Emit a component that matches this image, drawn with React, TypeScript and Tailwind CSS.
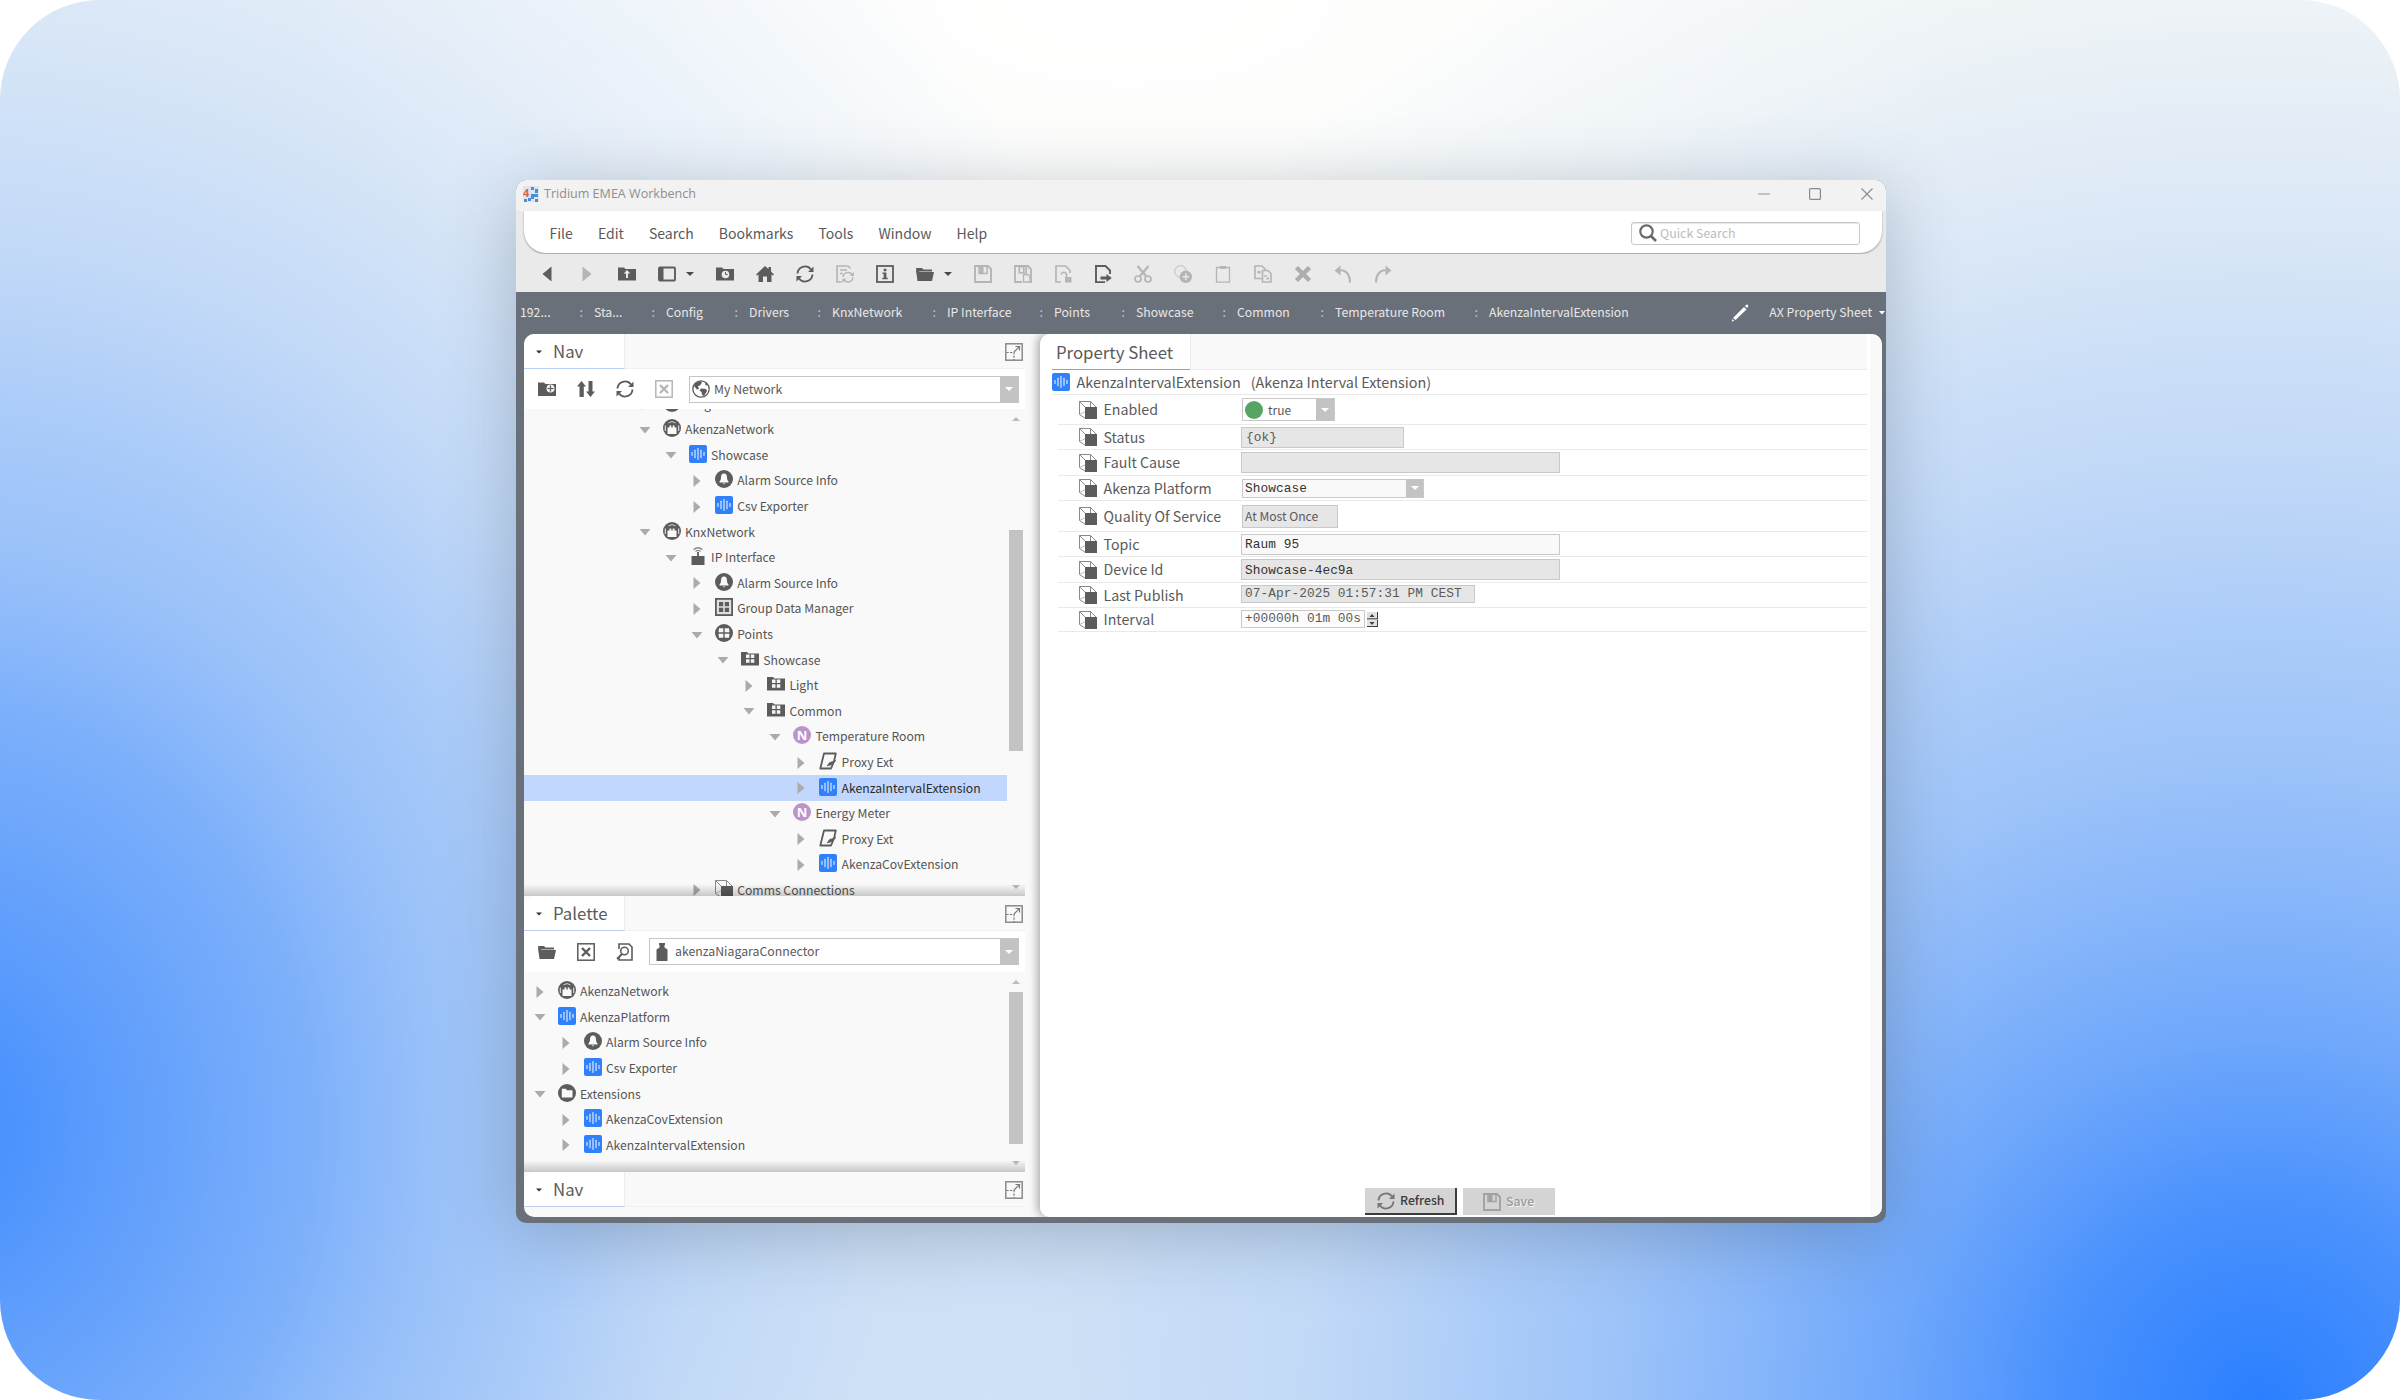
import type { ReactNode } from "react";

const DARK = "#5c5c5c";
const G = "#b5b5b5";

type IconProps = { color?: string; className?: string };

function Svg({ children, className = "w-[18px] h-[18px] shrink-0" }: { children: ReactNode; className?: string }) {
  return <svg viewBox="0 0 18 18" fill="none" className={className}>{children}</svg>;
}

function Akenza() {
  const bars = [[3, 4], [6, 8.500], [9, 12], [12, 8.500], [15, 4]];
  return (
    <Svg>
      <rect width="18" height="18" rx="2" fill="#2f80fb" />
      {bars.map(([x, h]) => (
        <rect key={x} x={x - 0.65} y={9 - h / 2} width="1.300" height={h} rx=".4" fill="#cfe1ff" />
      ))}
    </Svg>
  );
}

function Network() {
  return (
    <Svg>
      <circle cx="9" cy="9" r="9" fill={DARK} />
      <path d="M4.500 8.500H6.500V6.500h5v2h2V15h-9z" fill="#f9f9f9" />
      <path d="M2.300 6.500v5.500M15.700 6.500v5.500" stroke="#e4e4e4" strokeWidth="1.100" />
      <path d="M5.500 3.800Q9 1.400 12.500 3.800" stroke="#cfcfcf" strokeWidth="1" />
      <path d="M9 5v3.500" stroke={DARK} strokeWidth="1.400" />
    </Svg>
  );
}

function Bell() {
  return (
    <Svg>
      <circle cx="9" cy="9" r="9" fill={DARK} />
      <path d="M9 3.500c-2.300 0-3 1.800-3 4.200 0 2-.8 2.800-1.500 3.800v.9h9v-.9c-.7-1-1.500-1.800-1.500-3.800 0-2.400-.7-4.200-3-4.200zM7.800 13.200h2.400L9 14.500z" fill="#f9f9f9" />
    </Svg>
  );
}

function Router() {
  return (
    <Svg>
      <path d="M2.500 9h5.600V5h1.800v4h5.600v9h-13z" fill={DARK} />
      <path d="M4.500 2.800Q9-1.300 13.500 2.800M6.500 4.500Q9 2.300 11.500 4.500" stroke="#8a8a8a" strokeWidth="1.300" />
    </Svg>
  );
}

function GridBox() {
  return (
    <Svg>
      <rect x=".9" y=".9" width="16.200" height="16.200" stroke={DARK} strokeWidth="1.800" fill="#dedede" />
      <path d="M4 4h4.200v4.200H4zM9.800 4H14v4.200H9.800zM4 9.800h4.200V14H4zM9.800 9.800H14V14H9.800z" fill={DARK} />
    </Svg>
  );
}

function Points() {
  return (
    <Svg>
      <circle cx="9" cy="9" r="9" fill={DARK} />
      <path d="M4 4.200h4.300v4H3.500zM9.700 4.200H14l.5 4H9.700zM3.500 9.800h4.800v4H4zM9.700 9.800h4.800l-.5 4H9.700z" fill="#f9f9f9" />
    </Svg>
  );
}

function PointFolder() {
  return (
    <Svg>
      <path d="M0 2h6l1.500 1.500H18V15.500H0z" fill={DARK} />
      <path d="M5 4.500h3.500V8H5zM9.800 4.500h3.500V8H9.800zM5 9.300h3.500v3.500H5zM9.800 9.300h3.500v3.500H9.800z" fill="#f4f4f4" />
    </Svg>
  );
}

function Numeric() {
  return (
    <span className="w-[18px] h-[18px] shrink-0 rounded-full bg-[#bc93cb] text-white font-bold text-[13px] leading-[18px] text-center font-['Noto_Sans',sans-serif]">
      N
    </span>
  );
}

function Proxy() {
  return (
    <Svg>
      <path d="M5 1.500H16.800L15 9.500l-3 7H1.300z" stroke={DARK} strokeWidth="1.800" strokeLinejoin="round" />
      <path d="M17 8.500l-6.500 2L8 14l4-1z" fill={DARK} stroke={DARK} strokeWidth=".6" />
    </Svg>
  );
}

function Cube() {
  return (
    <Svg>
      <path d="M.5.5h11l6 6M.5.5L6.500 6.500M.5.5v13l6 4M11.500.5v6" stroke="#8a8a8a" strokeWidth="1" />
      <path d="M.5 13.500l6-3" stroke="#aaa" strokeWidth=".8" />
      <rect x="6" y="6" width="12" height="12" fill={DARK} />
    </Svg>
  );
}

function CircleFolder() {
  return (
    <Svg>
      <circle cx="9" cy="9" r="9" fill={DARK} />
      <path d="M3.800 4.800h4l1.200 1.400h5.500v7.300H3.800z" fill="#f9f9f9" />
    </Svg>
  );
}

function Refresh({ color = DARK, className }: IconProps) {
  return (
    <Svg className={className}>
      <path d="M1.500 8.500A7.500 7.500 0 0 1 15 4.500M16.500 9.500A7.500 7.500 0 0 1 3 13.500" stroke={color} strokeWidth="1.900" />
      <path d="M17.500 1.500v5.500h-5.500zM.5 16.500v-5.500h5.500z" fill={color} />
    </Svg>
  );
}

function Floppy({ color = G, className }: IconProps) {
  return (
    <Svg className={className}>
      <path d="M1 1h13l3 3v13H1z" stroke={color} strokeWidth="1.900" />
      <path d="M5 1v7.500h8V1" stroke={color} strokeWidth="1.500" />
      <path d="M5.500 2h4v6h-4z" fill={color} />
    </Svg>
  );
}

function OpenFolder() {
  return (
    <Svg>
      <path d="M0 3h6l1.500 1.500H16V6.500H3L1.500 12z" fill={DARK} />
      <path d="M3.500 7H18l-2 9H1.500L0 5z" fill={DARK} />
    </Svg>
  );
}

function BoxX({ color = DARK }: IconProps) {
  return (
    <Svg>
      <rect x=".8" y=".8" width="16.400" height="16.400" stroke={color} strokeWidth="1.500" />
      <path d="M5 5l8 8M13 5l-8 8" stroke={color} strokeWidth="2.400" />
    </Svg>
  );
}

function Expand() {
  return (
    <Svg>
      <rect x=".8" y=".8" width="16.400" height="16.400" stroke="#828282" strokeWidth="1.400" />
      <path d="M9 9l5.500-5.500M10.500 3.500h4v4" stroke="#777" strokeWidth="1.200" />
      <path d="M1.500 9.500h7.500v7.500" stroke="#777" strokeWidth="1.200" strokeDasharray="2.200 1.300" />
    </Svg>
  );
}

function Caret({ className = "text-[#4a4a4a]" }: { className?: string }) {
  return <svg viewBox="0 0 8 4" className={`w-2 h-1 shrink-0 ${className}`}><path d="M0 0h8L4 4z" fill="currentColor" /></svg>;
}

const toolbar: { name: string; caret?: boolean; icon: ReactNode }[] = [
  { name: "back", icon: <Svg><path d="M13.500 1.500v15L4.500 9z" fill={DARK} /></Svg> },
  { name: "forward", icon: <Svg><path d="M4.500 1.500v15l9-7.500z" fill={G} /></Svg> },
  {
    name: "up",
    icon: <Svg><path d="M0 2.500h6L7.500 4H18v11.500H0z" fill={DARK} /><path d="M9 5l3.300 3.500H10V13H8V8.500H5.700z" fill="#eaeaea" /></Svg>,
  },
  {
    name: "sidebar",
    caret: true,
    icon: <Svg><rect x="1" y="2.500" width="16" height="13" rx="1" stroke={DARK} strokeWidth="1.900" /><path d="M1 2.500h4.500v13H1z" fill={DARK} /></Svg>,
  },
  {
    name: "recent",
    icon: <Svg><path d="M0 2.500h6L7.500 4H18v11.500H0z" fill={DARK} /><circle cx="9.500" cy="9.500" r="3.800" fill="#eaeaea" /><path d="M9.500 7v2.500h2.200" stroke={DARK} strokeWidth="1" /></Svg>,
  },
  { name: "home", icon: <Svg><path d="M9 1l3.500 3V2H15v4.500l3 3-1.200 1-1.300-1V17H11v-5.500H7V17H2.500V9.500l-1.300 1-1.200-1z" fill={DARK} /></Svg> },
  { name: "refresh", icon: <Refresh /> },
  {
    name: "reload",
    icon: (
      <Svg>
        <path d="M5.500 17H1V1h11l2.500 2.500M4 5h7M4 8.500h3" stroke={G} strokeWidth="1.600" />
        <path d="M7 12a5 5 0 0 1 9-2.500M17 12.500a5 5 0 0 1-9 2.500" stroke={G} strokeWidth="1.400" />
        <path d="M17.800 7v4h-4zM6.300 17.800v-4h4z" fill={G} />
      </Svg>
    ),
  },
  {
    name: "info",
    icon: <Svg><rect x="1" y="1" width="16" height="16" stroke={DARK} strokeWidth="1.800" /><path d="M7.700 3.800h2.700v2.400H7.700zM6.500 7.500h3.900v5.300h1.300v1.500H6.300v-1.500h1.400V9H6.500z" fill={DARK} /></Svg>,
  },
  { name: "open", caret: true, icon: <OpenFolder /> },
  { name: "save", icon: <Floppy /> },
  {
    name: "save-as",
    icon: <Svg><path d="M8 17H1V1h13l3 3v13h-1" stroke={G} strokeWidth="1.800" /><path d="M5 1v7h7.500V1M5.500 2h4v5.500h-4z" stroke={G} strokeWidth="1.200" fill={G} fillOpacity=".6" /><path d="M9.500 9.500h4.500l2 2v5.500H9.500z" stroke={G} strokeWidth="1.300" /></Svg>,
  },
  {
    name: "lock",
    icon: <Svg><path d="M7 17H2V1h9.500L16 5.500V8" stroke={G} strokeWidth="1.700" /><path d="M7 9.500c1-3 5-3 5.500 0v3" stroke={G} strokeWidth="1.600" /><path d="M11 12h6.500v5.500H11z" fill={G} /></Svg>,
  },
  {
    name: "export",
    icon: <Svg><path d="M11 17.100H2V1h9.500L16 5.500V9" stroke={DARK} strokeWidth="1.900" /><path d="M6.500 11.500h6V9l5.300 4-5.300 4v-2.500h-6z" fill={DARK} /></Svg>,
  },
  {
    name: "cut",
    icon: <Svg><path d="M3.500 1l8.500 10M14.500 1L6 11" stroke={G} strokeWidth="2.200" /><circle cx="4" cy="14" r="3" stroke={G} strokeWidth="1.700" /><circle cx="14" cy="14" r="3" stroke={G} strokeWidth="1.700" /></Svg>,
  },
  {
    name: "duplicate",
    icon: <Svg><circle cx="6.500" cy="6.500" r="5.800" stroke="#cacaca" strokeWidth="1.200" /><circle cx="11.800" cy="11.800" r="6.200" fill={G} /><path d="M11.800 8.500v6.600M8.500 11.800h6.600" stroke="#eaeaea" strokeWidth="1.400" /></Svg>,
  },
  {
    name: "paste",
    icon: <Svg><path d="M2.500 2.500h13v14.700h-13z" stroke={G} strokeWidth="1.300" /><path d="M6 1h6v2.800H6z" fill={G} /></Svg>,
  },
  {
    name: "copy",
    icon: <Svg><path d="M8 13.500H1V1h7l3 3v2" stroke={G} strokeWidth="1.600" /><path d="M8.500 5.500h5.500l3 3V17H8.500z" stroke={G} strokeWidth="1.600" /><path d="M3.500 6h3v2.500h-3zM10.500 10h2v2h-2zM12.500 12.500h2.500v2h-2.500z" fill={G} /></Svg>,
  },
  { name: "delete", icon: <Svg><path d="M2.500 2.500l13 13M15.500 2.500l-13 13" stroke="#adadad" strokeWidth="4.400" /></Svg> },
  { name: "undo", icon: <Svg><path d="M4 5.500c8-1.500 12 4 12 12" stroke={G} strokeWidth="2.200" /><path d="M.5 5.500L6.500.5v10z" fill={G} /></Svg> },
  { name: "redo", icon: <Svg><path d="M14 5.500C6 4 2 9.500 2 17.500" stroke={G} strokeWidth="2.200" /><path d="M17.500 5.500L11.500.5v10z" fill={G} /></Svg> },
];

const crumbs = [
  { label: "192...", width: "w-[74px]" },
  { label: "Sta...", width: "w-[72px]" },
  { label: "Config", width: "w-[83px]" },
  { label: "Drivers", width: "w-[83px]" },
  { label: "KnxNetwork", width: "w-[115px]" },
  { label: "IP Interface", width: "w-[107px]" },
  { label: "Points", width: "w-[82px]" },
  { label: "Showcase", width: "w-[101px]" },
  { label: "Common", width: "w-[98px]" },
  { label: "Temperature Room", width: "w-[154px]" },
];

type Row = { label: string; level: number; icon: ReactNode; open?: boolean; selected?: boolean };

const navRows: Row[] = [
  { label: "NiagaraNetwork", level: 0, icon: <Network /> },
  { label: "AkenzaNetwork", level: 0, icon: <Network />, open: true },
  { label: "Showcase", level: 1, icon: <Akenza />, open: true },
  { label: "Alarm Source Info", level: 2, icon: <Bell /> },
  { label: "Csv Exporter", level: 2, icon: <Akenza /> },
  { label: "KnxNetwork", level: 0, icon: <Network />, open: true },
  { label: "IP Interface", level: 1, icon: <Router />, open: true },
  { label: "Alarm Source Info", level: 2, icon: <Bell /> },
  { label: "Group Data Manager", level: 2, icon: <GridBox /> },
  { label: "Points", level: 2, icon: <Points />, open: true },
  { label: "Showcase", level: 3, icon: <PointFolder />, open: true },
  { label: "Light", level: 4, icon: <PointFolder /> },
  { label: "Common", level: 4, icon: <PointFolder />, open: true },
  { label: "Temperature Room", level: 5, icon: <Numeric />, open: true },
  { label: "Proxy Ext", level: 6, icon: <Proxy /> },
  { label: "AkenzaIntervalExtension", level: 6, icon: <Akenza />, selected: true },
  { label: "Energy Meter", level: 5, icon: <Numeric />, open: true },
  { label: "Proxy Ext", level: 6, icon: <Proxy /> },
  { label: "AkenzaCovExtension", level: 6, icon: <Akenza /> },
  { label: "Comms Connections", level: 2, icon: <Cube /> },
];

const paletteRows: Row[] = [
  { label: "AkenzaNetwork", level: 0, icon: <Network /> },
  { label: "AkenzaPlatform", level: 0, icon: <Akenza />, open: true },
  { label: "Alarm Source Info", level: 1, icon: <Bell /> },
  { label: "Csv Exporter", level: 1, icon: <Akenza /> },
  { label: "Extensions", level: 0, icon: <CircleFolder />, open: true },
  { label: "AkenzaCovExtension", level: 1, icon: <Akenza /> },
  { label: "AkenzaIntervalExtension", level: 1, icon: <Akenza /> },
];

function TreeRow({ row, base }: { row: Row; base: number }) {
  return (
    <div
      className={`flex items-center h-[25.6px] shrink-0 ${row.selected ? "bg-[#c2d7fe] text-[#2b2b2b]" : "text-[#555]"}`}
      style={{ paddingLeft: base + row.level * 26.1 }}
    >
      <svg viewBox="0 0 12 12" className="w-3 h-3 mr-3 shrink-0">
        <path d={row.open ? "M.5 3h11L6 9.500z" : "M2.500 0v12l7-6z"} fill="#ababab" />
      </svg>
      <span className="flex -mt-[3px]">{row.icon}</span>
      <span className="ml-[4.500px] -mt-px text-[12.200px] leading-none whitespace-nowrap">{row.label}</span>
    </div>
  );
}

function ScrollBar({ thumb }: { thumb: string }) {
  return (
    <div className="w-[14px] mr-0.5 shrink-0 flex flex-col items-center pt-[8px] pb-[7px]">
      <svg viewBox="0 0 8 4" className="w-2 h-1"><path d="M0 4h8L4 0z" fill="#bdbdbd" /></svg>
      <div className={`w-[14px] bg-[#c3c3c3] ${thumb}`} />
      <Caret className="mt-auto text-[#bdbdbd]" />
    </div>
  );
}

function PanelHeader({ title }: { title: string }) {
  return (
    <div className="flex justify-between h-[35px] shrink-0 border-b border-[#f0f0f0]">
      <div className="flex items-center w-[101px] h-[35px] pt-px pl-3 rounded-tl-[10px] bg-white border-r border-r-[#ececec] border-b border-b-[#b9d0f5]">
        <svg viewBox="0 0 8 4" className="w-[6px] h-1 shrink-0"><path d="M0 0h8L4 4z" fill="#333" /></svg>
        <span className="ml-[11px] text-[16.800px] leading-none text-[#5a5a5a]">{title}</span>
      </div>
      <div className="mt-[9px] mr-0.5"><Expand /></div>
    </div>
  );
}

function DropButton({ className }: { className: string }) {
  return (
    <span className={`flex items-center justify-center bg-[#c3c3c3] shrink-0 ${className}`}>
      <Caret className="text-white" />
    </span>
  );
}

const MONO = "font-['Liberation_Mono',monospace] text-[12.800px] tracking-[.06px]";

function Property({ label, height, children }: { label: string; height: string; children: ReactNode }) {
  return (
    <div className={`flex items-center shrink-0 ml-[18px] mr-[15px] border-b border-[#e9e9e9] ${height}`}>
      <div className="flex items-center w-[183px] pl-[21px] shrink-0">
        <Cube />
        <span className="ml-[6.500px] text-[14.200px] leading-none text-[#5a5a5a] whitespace-nowrap">{label}</span>
      </div>
      {children}
    </div>
  );
}

function TitleBar() {
  return (
    <div className="flex items-center h-[31px] shrink-0 bg-[#f2f2f2] pl-[7px] pr-[13px]">
      <svg viewBox="0 0 16 16" className="w-4 h-4 -mt-1">
        <rect width="16" height="16" fill="#dfe5ec" />
        <path d="M8 1h3v3H8zM12 3h3v4h-3zM8 8h4v3H8zM12 8h3v3h-3zM1 13h3v3H1zM5 12h3v3H5zM8 11h3v2H8zM12 13h3v3h-3z" fill="#4a8fdc" />
        <text x="0" y="10.500" fontSize="11" fontWeight="700" fontFamily="Open Sans, sans-serif" fill="#d9624f">4</text>
      </svg>
      <span className="ml-[5px] -mt-[3px] text-[12.550px] leading-none text-[#8f8f8f] font-['Open_Sans',sans-serif]">Tridium EMEA Workbench</span>
      <div className="flex items-center ml-auto gap-[39.700px] -mt-1">
        <svg viewBox="0 0 12 12" className="w-3 h-3"><path d="M0 6h12" stroke="#909090" /></svg>
        <svg viewBox="0 0 12 12" className="w-3 h-3"><rect x=".6" y=".6" width="10.800" height="10.800" rx="1" fill="none" stroke="#8a8a8a" strokeWidth="1.200" /></svg>
        <svg viewBox="0 0 12 12" className="w-3 h-3"><path d="M.5.5l11 11M11.500.5l-11 11" stroke="#8a8a8a" strokeWidth="1.100" /></svg>
      </div>
    </div>
  );
}

function MenuBar() {
  return (
    <div className="bg-[#eaeaea] h-[43px] shrink-0 pl-2 pr-1 pb-px">
      <div className="flex items-center h-[42px] bg-white rounded-b-[22px] shadow-[0_1px_2px_rgba(0,0,0,0.35)] pt-0.5 pl-[25.500px] pr-[22px] text-[14.050px] leading-none text-[#5a5a5a]">
        <div className="flex gap-[25px]">
          {["File", "Edit", "Search", "Bookmarks", "Tools", "Window", "Help"].map((m) => <span key={m}>{m}</span>)}
        </div>
        <div className="ml-auto flex items-center w-[229px] h-[23px] rounded-[3px] border border-[#c9c9c9] bg-white shadow-[inset_0_1px_1px_#e6e6e6] pl-[7px]">
          <Svg>
            <circle cx="7.500" cy="7.500" r="6.200" stroke="#6a6a6a" strokeWidth="2.200" />
            <path d="M12 12l5 5" stroke="#6a6a6a" strokeWidth="2.600" />
          </Svg>
          <span className="ml-[3px] text-[12.400px] leading-none text-[#bcbcbc]">Quick Search</span>
        </div>
      </div>
    </div>
  );
}

function ToolBar() {
  return (
    <div className="flex items-center h-[38px] shrink-0 bg-[#eaeaea] pl-[11px] pt-px">
      {toolbar.map((t) => (
        <div key={t.name} className="flex items-center">
          <span className="flex justify-center w-10">{t.icon}</span>
          {t.caret && <span className="w-[18px]"><Caret className="-ml-px text-[#4a4a4a]" /></span>}
        </div>
      ))}
    </div>
  );
}

function PathBar() {
  return (
    <div className="flex items-center h-[42px] shrink-0 pl-1 pb-px text-[12.250px] leading-none text-[#e8e8e8] whitespace-nowrap">
      {crumbs.map((c) => (
        <div key={c.label} className={`flex justify-between pr-[11px] shrink-0 ${c.width}`}>
          <span>{c.label}</span>
          <span className="text-[#c4c7cc]">:</span>
        </div>
      ))}
      <span>AkenzaIntervalExtension</span>
      <Svg className="w-[18px] h-[18px] ml-auto shrink-0">
        <path d="M2 14L13 3l2.500 2.500L4.500 16z" fill="white" />
        <path d="M14 2l1.500-1.500q1.500-.5 2 1.500L16 4zM1.300 15l2 2-2.500.5z" fill="white" />
      </Svg>
      <span className="ml-5">AX Property Sheet</span>
      <svg viewBox="0 0 6 4" className="w-1.5 h-1 ml-[7px] mr-px shrink-0"><path d="M0 0h6L3 3.500z" fill="white" /></svg>
    </div>
  );
}

function NavPanel() {
  return (
    <div className="flex flex-col w-[501px] shrink-0">
      <PanelHeader title="Nav" />
      <div className="flex items-center h-[40px] shrink-0 bg-white pl-[14px] pr-[6px] gap-[21px]">
        <Svg><path d="M0 2.500h6L7.500 4H18v12H0z" fill={DARK} /><circle cx="12.500" cy="8.500" r="4" fill="#eee" /><path d="M12.500 5.500v6M9.500 8.500h6" stroke={DARK} strokeWidth="1.200" /></Svg>
        <Svg><path d="M4.500 1L9 6.500H6.800V17H2.500V6.500H0zM13.500 17L9 11.500h2.500V1h4v10.500H18z" fill={DARK} /></Svg>
        <Refresh />
        <BoxX color={G} />
        <div className="flex flex-1 items-center h-[27px] -ml-[5px] border border-[#c6c6c6] pl-0.5">
          <Svg>
            <circle cx="9" cy="9" r="8.200" stroke={DARK} strokeWidth="1.300" />
            <path d="M3 3.500L8 1l2 1.500-2 3-2 .5 1 3-2 .5L2 6zM9 8.500l5 .5 1 2-3 5-2-1-.5-3-2-1.500zM13 2l3 3-2.500.5z" fill={DARK} />
          </Svg>
          <span className="ml-1 text-[12.300px] leading-none text-[#5a5a5a]">My Network</span>
          <DropButton className="ml-auto w-[18px] h-[26px]" />
        </div>
      </div>
      <div className="relative flex h-[487px] shrink-0 overflow-hidden">
        {/* scrolled, so the first row is mostly out of view */}
        <div className="w-[483px] mr-auto flex flex-col -mt-[17.600px]">
          {navRows.map((r, i) => <TreeRow key={i} row={r} base={114.5} />)}
        </div>
        <ScrollBar thumb="mt-[109px] h-[221px]" />
        <div className="absolute inset-x-0 bottom-0 h-3 bg-linear-to-b from-transparent to-black/20" />
      </div>

      <PanelHeader title="Palette" />
      <div className="flex items-center h-[41px] shrink-0 bg-white pl-[14px] pr-[6px] gap-[21px]">
        <OpenFolder />
        <BoxX />
        <Svg>
          <path d="M3 6V1h10l3 3v13H3v-3" stroke={DARK} strokeWidth="1.600" />
          <circle cx="8.500" cy="8" r="3.800" stroke={DARK} strokeWidth="1.500" />
          <path d="M6 11l-5 5" stroke={DARK} strokeWidth="2" />
        </Svg>
        <div className="flex flex-1 items-center h-[27px] -ml-[6px] border border-[#c6c6c6] pl-[3px]">
          <Svg><path d="M6 0h6v2H6zM6.500 2h5v2.500l3 2V18h-11V6.500l3-2z" fill={DARK} /></Svg>
          <span className="ml-1 text-[12.300px] leading-none text-[#5a5a5a]">akenzaNiagaraConnector</span>
          <DropButton className="ml-auto w-[18px] h-[26px]" />
        </div>
      </div>
      <div className="relative flex h-[200px] shrink-0 overflow-hidden">
        <div className="flex flex-col flex-1 pt-[7px]">
          {paletteRows.map((r, i) => <TreeRow key={i} row={r} base={9.5} />)}
        </div>
        <ScrollBar thumb="mt-[8px] h-[152px]" />
        <div className="absolute inset-x-0 bottom-0 h-3 bg-linear-to-b from-transparent to-black/20" />
      </div>
      <PanelHeader title="Nav" />
    </div>
  );
}

function PropertySheet() {
  return (
    <div className="flex w-[842px] shrink-0 rounded-[10px] bg-[#f9f9f9] overflow-hidden shadow-[-3px_0_8px_rgba(0,0,0,0.3)]">
      <div className="flex flex-col w-[830px] bg-white">
        <div className="flex h-[36px] shrink-0">
          <div className="w-[151px] h-[36px] pl-3 flex flex-col justify-end border-r border-[#ececec]">
            <div className="flex items-center pl-1 pt-px h-[35px] border-b border-[#79a5ec] text-[16.800px] leading-none text-[#5a5a5a] whitespace-nowrap">Property Sheet</div>
          </div>
          <div className="flex-1 mr-[3px] bg-[#f9f9f9] border-b border-[#ebebeb]" />
        </div>
        <div className="flex items-center h-[25px] shrink-0 ml-3 mr-[3px] border-b border-[#e9e9e9] text-[14.400px] leading-none text-[#5a5a5a]">
          <Akenza />
          <span className="ml-[6.500px]">AkenzaIntervalExtension</span>
          <span className="ml-[10px]">(Akenza Interval Extension)</span>
        </div>
        <div className="flex flex-col -mr-3">
          <Property label="Enabled" height="h-[30px]">
            <div className="flex items-center w-[93px] h-[23px] ml-px border border-[#c9c9c9] pl-0.5">
              <span className="w-[18px] h-[18px] rounded-full bg-[#57a563]" />
              <span className="ml-[5px] text-[12px] leading-none text-[#5a5a5a]">true</span>
              <DropButton className="ml-auto w-[18px] h-[22px]" />
            </div>
          </Property>
          <Property label="Status" height="h-[25px]">
            <div className={`flex items-center w-[163px] h-[21px] bg-[#e6e6e6] border border-[#c9c9c9] pl-1 pt-0.5 text-[#5a5a5a] ${MONO}`}>{"{ok}"}</div>
          </Property>
          <Property label="Fault Cause" height="h-[26px]">
            <div className="w-[319px] h-[21px] bg-[#e6e6e6] border border-[#c9c9c9]" />
          </Property>
          <Property label="Akenza Platform" height="h-[25px]">
            <div className={`flex items-center w-[182px] h-[19px] ml-px bg-[#f9f9f9] border border-[#c9c9c9] pl-0.5 text-[#333] ${MONO}`}>
              <span className="pt-px">Showcase</span>
              <DropButton className="ml-auto w-[17px] h-[18px]" />
            </div>
          </Property>
          <Property label="Quality Of Service" height="h-[31px]">
            <div className="flex items-center w-[96px] h-[23px] ml-px bg-[#e6e6e6] border border-[#c9c9c9] pl-0.5 text-[12.100px] leading-none text-[#5a5a5a] whitespace-nowrap">At Most Once</div>
          </Property>
          <Property label="Topic" height="h-[25px]">
            <div className={`flex items-center w-[319px] h-[21px] bg-[#f9f9f9] border border-[#c9c9c9] pl-[3px] pt-0.5 text-[#333] ${MONO}`}>Raum 95</div>
          </Property>
          <Property label="Device Id" height="h-[26px]">
            <div className={`flex items-center w-[319px] h-[21px] bg-[#e6e6e6] border border-[#c9c9c9] pl-[3px] pt-0.5 text-[#333] ${MONO}`}>Showcase-4ec9a</div>
          </Property>
          <Property label="Last Publish" height="h-[25px]">
            <div className={`flex items-center w-[234px] h-[18px] -mt-0.5 bg-[#e6e6e6] border border-[#c9c9c9] pl-[3px] text-[#5a5a5a] whitespace-nowrap ${MONO}`}>07-Apr-2025 01:57:31 PM CEST</div>
          </Property>
          <Property label="Interval" height="h-[24px]">
            <div className={`flex items-center w-[124px] h-[18px] -mt-0.5 bg-[#fcfcfc] border border-[#c9c9c9] pl-[3px] text-[#5a5a5a] whitespace-nowrap ${MONO}`}>+00000h 01m 00s</div>
            <svg viewBox="0 0 11 15" className="w-[11px] h-[15px] ml-0.5">
              <rect width="11" height="15" fill="#e2e2e2" />
              <path d="M10.500 0v7M0 6.800h11M10.500 8v7M0 14.500h11" stroke="#3c3c3c" />
              <path d="M2.500 5h5L5 2zM2.500 10h5L5 13z" fill="#3c3c3c" />
            </svg>
          </Property>
        </div>
        <div className="mt-auto mb-0.5 ml-[325px] flex gap-[6px] text-[12.300px] leading-none">
          <button className="flex items-center pl-3 w-[92px] h-[27px] bg-[#d4d4d4] border-r-2 border-b-2 border-[#3c3c3c] text-[#3c3c3c]">
            <Refresh color="#757575" />
            <span className="ml-[5px] font-medium">Refresh</span>
          </button>
          <button className="flex items-center pl-5 w-[92px] h-[27px] bg-[#d4d4d4] text-[#9c9c9c]">
            <Floppy color="#a2a2a2" />
            <span className="ml-[5px] font-medium [text-shadow:1px_1px_0_#f4f4f4]">Save</span>
          </button>
        </div>
      </div>
    </div>
  );
}

export default function App() {
  return (
    <div className="w-[2400px] h-[1400px] bg-white overflow-hidden">
      <div className="w-full h-full rounded-[100px] pt-[180px] pl-[516px] bg-[radial-gradient(circle_1600px_at_2260px_1405px,rgba(43,127,255,1)_0%,rgba(43,127,255,0.86)_12%,rgba(43,127,255,0.67)_23%,rgba(43,127,255,0.55)_32%,rgba(43,127,255,0.44)_41%,rgba(43,127,255,0.36)_50%,rgba(43,127,255,0.27)_59%,rgba(43,127,255,0.21)_67%,rgba(43,127,255,0.15)_74%,rgba(43,127,255,0.06)_87%,rgba(43,127,255,0)_100%),radial-gradient(ellipse_1375px_1595px_at_-60px_1130px,rgba(43,127,255,0.88)_0%,rgba(43,127,255,0.84)_5%,rgba(43,127,255,0.73)_15%,rgba(43,127,255,0.6)_27%,rgba(43,127,255,0.48)_35%,rgba(43,127,255,0.36)_47%,rgba(43,127,255,0.27)_55%,rgba(43,127,255,0.16)_69%,rgba(43,127,255,0.1)_78%,rgba(43,127,255,0)_100%),radial-gradient(ellipse_900px_400px_at_1130px_0px,#ffffff_0%,rgba(255,255,255,0)_100%),linear-gradient(#f9faf6,#f9faf4)]">
        <div className="flex flex-col w-[1370px] h-[1043px] rounded-[10px] overflow-hidden bg-[#6a707a] shadow-[0_12px_70px_rgba(50,65,90,0.3)] font-['Noto_Sans_CJK_SC','Open_Sans',sans-serif]">
          <TitleBar />
          <MenuBar />
          <ToolBar />
          <PathBar />
          <div className="flex flex-1 ml-2 mr-1 mb-[6px] min-h-0 rounded-[10px] bg-[#f9f9f9] overflow-hidden">
            <NavPanel />
            <div className="w-[15px] shrink-0" />
            <PropertySheet />
          </div>
        </div>
      </div>
    </div>
  );
}
